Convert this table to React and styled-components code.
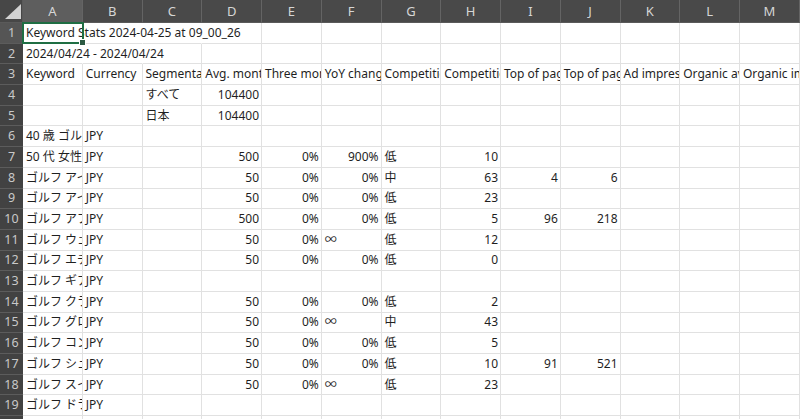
import React from 'react';
import styled, { createGlobalStyle } from 'styled-components';

const GlobalStyle = createGlobalStyle`
  html, body { margin: 0; padding: 0; background: #ffffff; overflow: hidden; }
  body { font-family: "Noto Sans", "Noto Sans CJK JP", sans-serif; }
`;

const COL_W = 59.75;
const ROW_H = 20.7;
const COLS = ['A', 'B', 'C', 'D', 'E', 'F', 'G', 'H', 'I', 'J', 'K', 'L', 'M', 'N'];

const Sheet = styled.div`
  position: relative;
  display: grid;
  grid-template-columns: 23px repeat(${COLS.length}, ${COL_W}px);
  grid-template-rows: 23px repeat(20, ${ROW_H}px);
  width: 800px;
  height: 419px;
  overflow: hidden;
  background: #ffffff;
`;

const Corner = styled.div`
  position: relative;
  background: #474747;
  border-bottom: 1px solid #5a5a5a;
  border-right: 1px solid #5a5a5a;
  box-sizing: border-box;
  &::after {
    content: '';
    position: absolute;
    left: 5px;
    top: 4px;
    width: 16px;
    height: 15px;
    background: #d2d2d2;
    clip-path: polygon(100% 0, 100% 100%, 0 100%);
  }
`;

const ColHeader = styled.div`
  box-sizing: border-box;
  display: flex;
  align-items: center;
  justify-content: center;
  background: ${(p) => (p.$active ? '#5e5e5e' : '#494949')};
  color: #d6d6d6;
  font-size: 13px;
  line-height: 16px;
  border-right: 1px solid #646464;
  border-bottom: 1px solid #5a5a5a;
`;

const RowHeader = styled.div`
  box-sizing: border-box;
  display: flex;
  align-items: center;
  justify-content: center;
  background: ${(p) => (p.$active ? '#555555' : '#424242')};
  color: #c9c9c9;
  font-size: 12.5px;
  line-height: 16px;
  border-bottom: 1px solid #5c5c5c;
`;

const Cell = styled.div`
  box-sizing: border-box;
  display: flex;
  align-items: center;
  justify-content: ${(p) => (p.$align === 'r' ? 'flex-end' : 'flex-start')};
  padding: 0 2px 0 3px;
  min-width: 0;
  white-space: nowrap;
  overflow: ${(p) => (p.$spill ? 'visible' : 'hidden')};
  font-size: 12px;
  line-height: 16px;
  color: #1f1f1f;
  border-bottom: 1px solid #e1e1e1;
  border-right: 1px solid ${(p) => (p.$open ? 'transparent' : '#e1e1e1')};
`;

const Selection = styled.div`
  position: absolute;
  left: 22px;
  top: 22px;
  width: 62px;
  height: 22px;
  box-sizing: border-box;
  border: 2px solid #1f6e43;
  pointer-events: none;
  &::after {
    content: '';
    position: absolute;
    right: -4px;
    bottom: -4px;
    width: 5px;
    height: 5px;
    background: #2b5a43;
    border: 1px solid #ffffff;
  }
`;

// cell helper: [value, align]
const T = (v) => ({ v, a: 'l' });
const N = (v) => ({ v, a: 'r' });
const E = { v: '', a: 'l' };

const header3 = [
  'Keyword', 'Currency', 'Segmentation', 'Avg. monthly searches', 'Three month change',
  'YoY change', 'Competition', 'Competition (indexed value)', 'Top of page bid (low range)',
  'Top of page bid (high range)', 'Ad impression share', 'Organic average position',
  'Organic impression share', '',
].map(T);

const dataRow = (kw, d) => {
  const base = [T(kw), T('JPY')];
  if (!d) return base;
  const [avg, three, yoy, comp, idx, lo, hi] = d;
  return [
    ...base,
    E,
    N(avg),
    N(three),
    yoy === '∞' ? T('∞') : N(yoy),
    T(comp),
    N(idx),
    lo ? N(lo) : E,
    hi ? N(hi) : E,
  ];
};

const rows = [
  [{ v: 'Keyword Stats 2024-04-25 at 09_00_26', a: 'l', spill: true }],
  [{ v: '2024/04/24 - 2024/04/24', a: 'l', spill: true }],
  header3,
  [E, E, T('すべて'), N('104400')],
  [E, E, T('日本'), N('104400')],
  [T('40 歳 ゴルフ ウェア'), T('JPY')],
  dataRow('50 代 女性 ゴルフ ウェア', ['500', '0%', '900%', '低', '10']),
  dataRow('ゴルフ アイアン', ['50', '0%', '0%', '中', '63', '4', '6']),
  dataRow('ゴルフ アイアン セット', ['50', '0%', '0%', '低', '23']),
  dataRow('ゴルフ アプローチ', ['500', '0%', '0%', '低', '5', '96', '218']),
  dataRow('ゴルフ ウェア', ['50', '0%', '∞', '低', '12']),
  dataRow('ゴルフ エチケット', ['50', '0%', '0%', '低', '0']),
  dataRow('ゴルフ ギア'),
  dataRow('ゴルフ クラブ', ['50', '0%', '0%', '低', '2']),
  dataRow('ゴルフ グローブ', ['50', '0%', '∞', '中', '43']),
  dataRow('ゴルフ コンペ', ['50', '0%', '0%', '低', '5']),
  dataRow('ゴルフ シューズ', ['50', '0%', '0%', '低', '10', '91', '521']),
  dataRow('ゴルフ スイング', ['50', '0%', '∞', '低', '23']),
  dataRow('ゴルフ ドライバー'),
  [],
];

// which cells have their right gridline hidden because text spills over them
const openCells = { '0': [0, 1, 2], '1': [0, 1] };

export default function App() {
  return (
    <>
      <GlobalStyle />
      <Sheet>
        <Corner />
        {COLS.map((c, i) => (
          <ColHeader key={c} $active={i === 0}>{c}</ColHeader>
        ))}
        {rows.map((r, ri) => (
          <React.Fragment key={ri}>
            <RowHeader $active={ri === 0}>{ri + 1}</RowHeader>
            {COLS.map((c, ci) => {
              const cell = r[ci] || E;
              const open = (openCells[ri] || []).includes(ci);
              return (
                <Cell
                  key={c}
                  $align={cell.a}
                  $spill={cell.spill}
                  $open={open}
                >
                  {cell.v}
                </Cell>
              );
            })}
          </React.Fragment>
        ))}
        <Selection />
      </Sheet>
    </>
  );
}
